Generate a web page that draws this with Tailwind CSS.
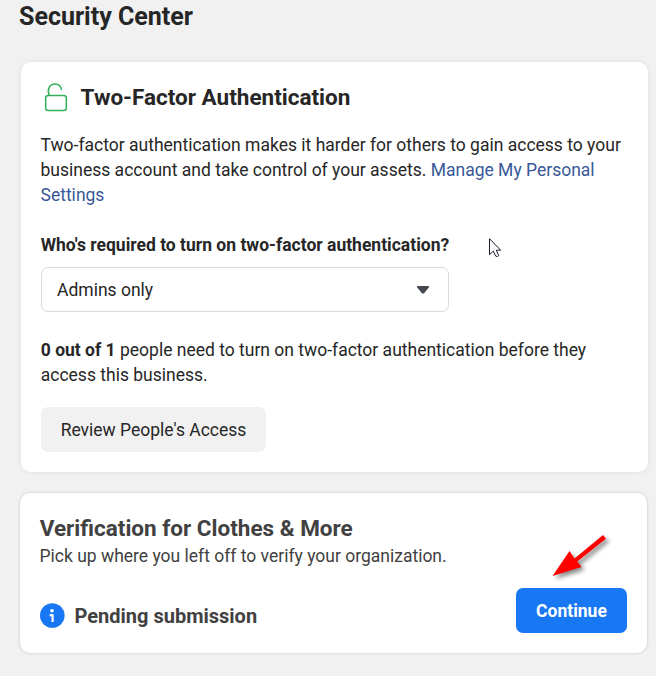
<!DOCTYPE html>
<html lang="en">
<head>
    <meta charset="UTF-8">
    <title>Security Center</title>
    <script src="https://cdn.jsdelivr.net/npm/@tailwindcss/browser@4"></script>
</head>
<body class="bg-[#f1f1f1] h-[676px] overflow-hidden relative font-[Roboto,sans-serif] text-[17.5px] leading-[25px] text-[#262626]">
    <main class="pl-5">
        <h1 class="-ml-px pt-0.5 text-[25px] leading-[30px] font-bold">Security Center</h1>

        <section class="mt-[30px] ml-px w-[627px] h-[410px] bg-white rounded-[10px] shadow-[0_0_5px_rgba(0,0,0,0.08)] px-5 pt-5">
            <div class="flex items-center h-[30px]">
                <svg class="w-[30px] h-[30px]" viewBox="0 0 30 30" fill="none" stroke="#31b057" stroke-width="1.5" stroke-linecap="round">
                    <rect x="4.7" y="13.6" width="20.6" height="15" rx="2.5" />
                    <path d="M8.2 13.2C5.8 7.6 8.600 1.900 13.900 1.900c3.600 0 6 2 6.600 5.400" />
                </svg>
                <h2 class="ml-[9.5px] text-[22.5px] font-bold">Two-Factor Authentication</h2>
            </div>
            <p class="mt-[21px] -ml-[0.5px]">
                Two-factor authentication makes it harder for others to gain access to your<br>
                business account and take control of your assets. <a href="#" class="text-[#385898]">Manage My Personal<br>Settings</a>
            </p>
            <h3 class="mt-[25px] -ml-[0.25px] font-bold">Who's required to turn on two-factor authentication?</h3>
            <div class="mt-[9px] w-[408px] h-[45px] flex items-center justify-between border border-[#d8dadf] rounded-[7px] pl-[15px] pr-[18px]">
                <span class="pt-0.5">Admins only</span>
                <svg class="w-3.5 h-2.5" viewBox="0 0 14 10" fill="#444950">
                    <path d="M1.8 1h10.4c.8 0 1.1.8.6 1.5L8.3 7.900c-.7.8-1.900.8-2.600 0L1.200 2.500C.7 1.800 1 1 1.800 1z" />
                </svg>
            </div>
            <p class="mt-[26px] -ml-[0.25px]">
                <b>0 out of 1</b> people need to turn on two-factor authentication before they<br>
                access this business.
            </p>
            <button class="mt-[19px] pt-0.5 w-[225px] h-[45px] rounded-[7px] bg-[#f1f1f1]">Review People's Access</button>
        </section>

        <section class="mt-[21px] w-[627px] h-[160px] bg-white rounded-[10px] shadow-[0_0_3px_rgba(0,0,0,0.2)] px-5 pt-5 text-[#414141]">
            <h2 class="-ml-[0.25px] text-[22.5px] leading-[30px] font-bold">Verification for Clothes &amp; More</h2>
            <p class="-ml-[0.5px] pt-px">Pick up where you left off to verify your organization.</p>
            <div class="mt-[19px] flex items-center justify-between">
                <div class="flex items-center pt-2.5">
                    <svg class="w-[25px] h-[25px]" viewBox="0 0 25 25">
                        <circle cx="12.3" cy="12.5" r="12.3" fill="#1877f2" />
                        <circle cx="12" cy="7.7" r="1.8" fill="#fff" />
                        <path d="M9.7 12.2h2.900v6.800" fill="none" stroke="#fff" stroke-width="2.2" stroke-linejoin="round" />
                    </svg>
                    <h3 class="ml-[9.5px] pt-0.5 text-[20px] font-bold">Pending submission</h3>
                </div>
                <button class="w-[111px] h-[45px] pt-0.5 rounded-[7px] bg-[#1877f2] text-white font-bold">Continue</button>
            </div>
        </section>
    </main>

    <!-- mouse pointer -->
    <svg class="absolute left-[489px] top-[238px] w-3.5 h-5" viewBox="0 0 14 20" fill="#fff" stroke="#1a1a2a" stroke-width="1">
        <path d="M.5.7v16l3.800-3.600 2.400 5 2 .4 1-1-2.400-5.300h4.400z" />
    </svg>

    <!-- arrow pointing at the continue button -->
    <svg class="absolute left-[548px] top-[530px] w-[66px] h-[54px] drop-shadow-[3px_3px_2px_rgba(0,0,0,0.45)]" viewBox="0 0 66 54" fill="#f00">
        <path d="M4.5 46 21.500 21l5 7.500L55 5l3 3.700L29.300 31.500l4.200 5.500z" />
    </svg>
</body>
</html>
